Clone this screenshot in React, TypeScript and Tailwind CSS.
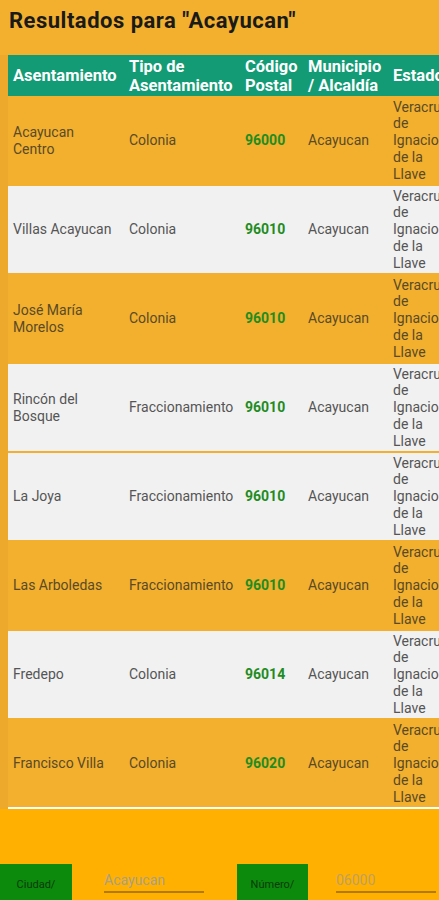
import React from "react";

type Row = { a: string; t: string; cp: string; m: string; gray: boolean };

const rows: Row[] = [
  { a: "Acayucan Centro", t: "Colonia", cp: "96000", m: "Acayucan", gray: false },
  { a: "Villas Acayucan", t: "Colonia", cp: "96010", m: "Acayucan", gray: true },
  { a: "José María Morelos", t: "Colonia", cp: "96010", m: "Acayucan", gray: false },
  { a: "Rincón del Bosque", t: "Fraccionamiento", cp: "96010", m: "Acayucan", gray: true },
  { a: "La Joya", t: "Fraccionamiento", cp: "96010", m: "Acayucan", gray: true },
  { a: "Las Arboledas", t: "Fraccionamiento", cp: "96010", m: "Acayucan", gray: false },
  { a: "Fredepo", t: "Colonia", cp: "96014", m: "Acayucan", gray: true },
  { a: "Francisco Villa", t: "Colonia", cp: "96020", m: "Acayucan", gray: false },
];

const cols = "grid grid-cols-[117px_116px_63px_85px_62px]";

export default function App() {
  return (
    <div
      className="w-[439px] h-[900px] overflow-hidden flex flex-col bg-[#FFB000]"
      style={{ fontFamily: "Roboto, 'Noto Sans', sans-serif" }}
    >
      <div className="h-[809px] bg-[#F2B02E] flex flex-col shrink-0 overflow-hidden">
        <h1 className="text-[22px] leading-[28px] tracking-[0.5px] font-bold text-[#1a1a1a] pl-[9px] pt-[7px] h-[55px] whitespace-nowrap">
          Resultados para "Acayucan"
        </h1>
        <div className="bg-[#ECA92B] pl-[8px] flex flex-col w-[460px]">
          <div className={`${cols} bg-[#129B74] h-[41px] items-center text-white font-bold text-[16.5px] leading-[19px]`}>
            <div className="pl-[5px]">Asentamiento</div>
            <div className="pl-[4px]">Tipo de Asentamiento</div>
            <div className="pl-[4px]">Código Postal</div>
            <div className="pl-[4px] pr-[4px]">Municipio / Alcaldía</div>
            <div className="pl-[4px]">Estado</div>
          </div>
          <div className="h-[1px] bg-[#F2B02E]" />
          <div className="flex flex-col gap-[2px] bg-[#F2B02E]">
            {rows.map((r, i) => (
              <div
                key={i}
                className={`${cols} h-[87px] items-center text-[14px] leading-[16.7px] ${
                  r.gray ? "bg-[#F1F1F1] text-[#555555]" : "bg-[#F2B02E] text-[#5a4a26]"
                }`}
              >
                <div className="pl-[5px] pr-[10px]">{r.a}</div>
                <div className="pl-[4px]">{r.t}</div>
                <div className="pl-[4px] font-bold text-[#1F8C1F]">{r.cp}</div>
                <div className="pl-[4px]">{r.m}</div>
                <div className="pl-[4px] pr-[4px]">Veracruz de Ignacio de la Llave</div>
              </div>
            ))}
          </div>
          <div className="h-[2px] bg-white" />
        </div>
      </div>
      <div className="flex-1 flex items-start pt-[55px]">
        <div className="w-[72px] h-[48px] bg-[#0B8A0B] flex items-start justify-center pt-[13px] text-[11px] text-[#0B3B0B]">
          Ciudad/
        </div>
        <div className="ml-[32px] w-[100px] mt-[7px] border-b-[2px] border-[#B07C00] pb-[2px] text-[14px] leading-[18px] text-[#A8A08A]">
          Acayucan
        </div>
        <div className="ml-[33px] w-[71px] h-[48px] bg-[#0B8A0B] flex items-start justify-center pt-[13px] text-[11px] text-[#0B3B0B]">
          Número/
        </div>
        <div className="ml-[28px] w-[100px] mt-[7px] border-b-[2px] border-[#B07C00] pb-[2px] text-[14px] leading-[18px] text-[#C0A060]">
          06000
        </div>
      </div>
    </div>
  );
}
